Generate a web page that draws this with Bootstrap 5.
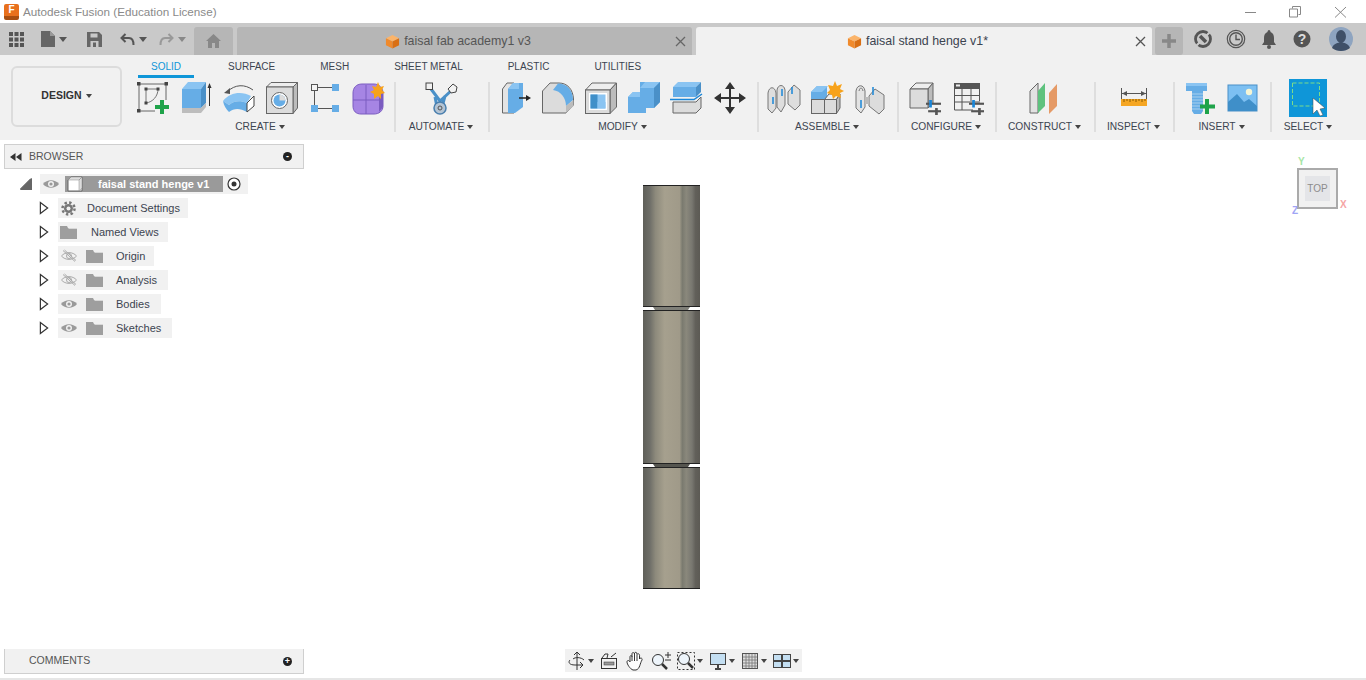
<!DOCTYPE html>
<html lang="en">
<head>
  <meta charset="UTF-8">
  <title>Autodesk Fusion (Education License)</title>
  <meta name="viewport" content="width=device-width, initial-scale=1">
  <link href="https://cdn.jsdelivr.net/npm/bootstrap@5.3.0/dist/css/bootstrap.min.css" rel="stylesheet">
  <style>
    html, body { height: 680px; overflow: hidden; background: #fff; }
    body { font-family: "Liberation Sans", Arial, sans-serif; font-size: 11px; color: #3c4450; }
    svg { display: block; flex: none; }

    .title-bar { height: 23px; color: #8a8a8a; font-size: 11.7px; }
    .app-logo { width: 15px; height: 16px; margin-left: 4px; margin-right: 4px; background: #e8701c; border-bottom: 4px solid #a84e10; border-radius: 2px; color: #fff; font-size: 10px; font-weight: bold; line-height: 12px; text-align: center; }
    .win-btns { gap: 31px; margin-right: 19px; }

    .tab-bar { height: 32px; background: #c9c9c9; }
    .qa-tools { width: 194px; padding-left: 9px; }
    .qa-file { margin-left: 17px; }
    .qa-save { margin-left: 20px; }
    .qa-undo { margin-left: 18px; }
    .qa-redo { margin-left: 12px; }
    .doc-tab { height: 28px; margin-top: 4px; background: #b6b6b6; border-radius: 3px 3px 0 0; color: #555; font-size: 12.4px; }
    .home-tab { width: 39px; margin-right: 4px; }
    .wide-tab { width: 455px; margin-right: 4px; padding-left: 4px; padding-right: 6px; }
    .tab-on { width: 456px; margin-right: 0; background: #f1f1f1; color: #3c4450; }
    .plus-tab { width: 28px; height: 28px; margin-top: 4px; margin-left: 3px; background: #b6b6b6; border-radius: 3px; }
    .acct-tools { gap: 13px; padding-left: 10px; }
    .acct-pic { margin-left: 4px; }

    .caret-mini { display: inline-block; width: 0; height: 0; border-left: 3px solid transparent; border-right: 3px solid transparent; border-top: 4px solid #444; flex: none; }
    .caret-big { border-left-width: 4px; border-right-width: 4px; border-top-width: 5px; border-top-color: #555; }
    .caret-pale { border-top-color: #888; }

    .ribbon { height: 85px; background: #f1f1f1; }
    .design-btn { width: 111px; height: 61px; margin: 11px 4px 0 11px; padding: 0 0 2px !important; background: #f1f1f1; border: 2px solid #dcdcdc; border-radius: 6px; color: #333; font-size: 10.5px; font-weight: bold; }
    .rb-tabs { height: 24px; padding-left: 12px; gap: 19px; }
    .rb-tabs .nav-link { padding: 4px 13px 0; height: 23px; color: #3c4450; font-size: 10px; border-bottom: 3px solid transparent; }
    .rb-tabs .nav-link.active { margin-right: 2px; color: #0f96d8; border-bottom-color: #0f96d8; }
    .rb-grp { position: relative; height: 56px; }
    .rb-grp + .rb-grp::before { content: ""; position: absolute; left: 0; top: 3px; bottom: 3px; width: 2px; background: #dedede; }
    .g-create { width: 268px; } .g-autom { width: 94px; } .g-modify { width: 269px; } .g-assem { width: 140px; }
    .g-config { width: 98px; } .g-constr { width: 99px; } .g-insp { width: 79px; } .g-ins { width: 97px; } .g-sel { width: 76px; }
    .rb-icons { height: 38px; gap: 9px; }
    .rb-label { height: 20px; gap: 3px; font-size: 10.2px; color: #3c4450; }

    .work-area { position: relative; height: 540px; }
    .side-head { width: 300px; height: 25px; margin: 4px 0 0 4px; background: #f1f1f1; border: 1px solid #cfcfcf; color: #555; font-size: 10.5px; }
    .side-head-foot { border-top: 0; margin-top: 0; color: #555; }
    .head-back { margin-left: 5px; }
    .head-label { margin-left: 7px; }
    .foot-label { margin-left: 24px; }
    .dot-btn { width: 9px; height: 9px; margin-right: 11px; background: #222; border-radius: 50%; color: #fff; line-height: 8px; text-align: center; font-size: 9px; font-weight: bold; }
    .tree-area { margin-top: -1px; }
    .tree-row { height: 24px; padding-left: 39px; color: #3c4450; }
    .tree-root { padding-left: 20px; }
    .tree-item { height: 20px; margin-left: 9px; background: #f1f1f1; padding-right: 9px; }
    .tree-root .tree-item { margin-left: 8px; padding-right: 0; }
    .root-eye { margin-left: 2px; }
    .root-name { height: 16px; width: 158px; margin-left: 5px; background: #9a9a9a; color: #fff; font-weight: bold; font-size: 11px; }
    .root-cube { margin-left: 2px; }
    .root-text { margin-left: 13px; }
    .root-dot { margin: 0 7px 0 4px; }
    .ico-lead { margin-left: 2px; }
    .ico-gear { margin-left: 3px; }
    .ico-folder { margin-left: 8px; }
    .lbl-a { margin-left: 11px; margin-right: -1px; }
    .lbl-b { margin-left: 14px; }
    .lbl-c { margin-left: 13px; }
    .lbl-w { margin-right: 2px; }

    .hinge-part { position: absolute; left: 643px; top: 45px; }
    .view-cube { position: absolute; left: 1297px; top: 28px; width: 41px; height: 41px; background: #f1f1f1; border: 2px solid #aaa; }
    .cube-face { width: 25px; height: 25px; background: #e4e5e8; color: #8c8c8c; font-size: 10px; }
    .axis-tag { position: absolute; font-size: 10px; font-weight: bold; line-height: 10px; }
    .axis-y { left: 1298px; top: 17px; color: #a6e6a6; }
    .axis-x { left: 1340px; top: 60px; color: #f5a5a5; }
    .axis-z { left: 1292px; top: 66px; color: #a0a5f5; }

    .foot-row { display: grid; grid-template-columns: 1fr auto 1fr; padding-bottom: 4px; border-bottom: 2px solid #e6e6e6; }
    .view-bar { height: 23px; width: 237px; padding-left: 2px; gap: 5px; background: #f1f1f1; }
    .view-grp { gap: 1px; }
    .view-nudge { margin-left: 1px; }
  </style>
</head>
<body>

<svg width="0" height="0" class="position-absolute">
  <defs>
    <symbol id="cube-orange" viewBox="0 0 16 16">
      <polygon points="8,1 15,4.5 8,8 1,4.5" fill="#fbb46a"/>
      <polygon points="1,4.5 8,8 8,15.5 1,12" fill="#f08a2c"/>
      <polygon points="15,4.5 8,8 8,15.5 15,12" fill="#d96f14"/>
    </symbol>
    <symbol id="eye" viewBox="0 0 18 12">
      <path d="M1 6C5 1 13 1 17 6C13 11 5 11 1 6Z" fill="#9a9a9a"/>
      <circle cx="9" cy="6" r="3" fill="#f1f1f1"/>
      <circle cx="9" cy="6" r="1.6" fill="#9a9a9a"/>
    </symbol>
    <symbol id="eye-off" viewBox="0 0 18 14">
      <path d="M1.500 7C5 2.500 13 2.500 16.500 7C13 11.500 5 11.500 1.500 7Z" fill="none" stroke="#aaa"/>
      <circle cx="9" cy="7" r="2.500" fill="none" stroke="#aaa"/>
      <path d="M3 1.500L15 12.500M4.500 1L16 11.500" stroke="#aaa" fill="none"/>
    </symbol>
    <symbol id="folder" viewBox="0 0 17 13">
      <path d="M0 0H7L8 2H17V13H0Z" fill="#9e9e9e"/>
      <path d="M0 3H8L9 2H17V3H0Z" fill="#d8d8d8"/>
    </symbol>
    <symbol id="tree-arrow" viewBox="0 0 11 14">
      <path d="M1.500 1L9.500 7L1.500 13Z" fill="#fff" stroke="#333" stroke-width="1.300"/>
    </symbol>
    <symbol id="sliders" viewBox="0 0 14 14">
      <rect x="0" y="2.500" width="14" height="2" fill="#555"/>
      <rect x="2" y="9.500" width="12" height="2" fill="#555"/>
      <rect x="3" y="0" width="2.500" height="7" fill="#1a86d8"/>
      <rect x="8.500" y="7.500" width="2.500" height="6.500" fill="#555"/>
    </symbol>
  </defs>
</svg>

<!-- title bar -->
<div class="title-bar d-flex align-items-center">
  <div class="app-logo">F</div>
  <span>Autodesk Fusion (Education License)</span>
  <div class="win-btns d-flex align-items-center ms-auto">
    <svg width="14" height="12" viewBox="0 0 14 12"><path d="M2 6.500H13" stroke="#888"/></svg>
    <svg width="14" height="12" viewBox="0 0 14 12"><path d="M4.500 2.500V.5H12.500V8.500H10.500M1.500 3H9.500V11H1.500Z" fill="none" stroke="#888"/></svg>
    <svg width="14" height="12" viewBox="0 0 14 12"><path d="M2 1L13 11.500M13 1L2 11.500" stroke="#888"/></svg>
  </div>
</div>

<!-- tab bar -->
<div class="tab-bar d-flex">
  <div class="qa-tools d-flex align-items-center">
    <svg width="15" height="15" viewBox="0 0 15 15" fill="#555"><rect width="4" height="4"/><rect x="5.500" width="4" height="4"/><rect x="11" width="4" height="4"/><rect y="5.500" width="4" height="4"/><rect x="5.500" y="5.500" width="4" height="4"/><rect x="11" y="5.500" width="4" height="4"/><rect y="11" width="4" height="4"/><rect x="5.500" y="11" width="4" height="4"/><rect x="11" y="11" width="4" height="4"/></svg>
    <svg class="qa-file" width="14" height="16" viewBox="0 0 14 16"><path d="M0 0H9L14 5V16H0Z" fill="#666"/><path d="M9 0L14 5H9Z" fill="#999"/></svg>
    <span class="caret-mini caret-big ms-1"></span>
    <svg class="qa-save" width="15" height="15" viewBox="0 0 15 15"><path d="M0 0H12L15 3V15H0Z" fill="#666"/><rect x="3.500" y="1.500" width="7" height="4" fill="#c9c9c9"/><rect x="3.500" y="9" width="8" height="6" fill="#c9c9c9"/><rect x="6" y="10.500" width="3" height="4.500" fill="#666"/></svg>
    <svg class="qa-undo" width="15" height="13" viewBox="0 0 15 13"><path d="M5.500 1L1.500 5L5.500 9M2 5H9C12 5 13.500 7 13.500 12" fill="none" stroke="#555" stroke-width="2"/></svg>
    <span class="caret-mini caret-big ms-1"></span>
    <svg class="qa-redo" width="15" height="13" viewBox="0 0 15 13"><path d="M9.500 1L13.500 5L9.500 9M13 5H6C3 5 1.500 7 1.500 12" fill="none" stroke="#999" stroke-width="2"/></svg>
    <span class="caret-mini caret-big caret-pale ms-1"></span>
  </div>
  <div class="doc-tab home-tab d-flex align-items-center justify-content-center">
    <svg width="15" height="14" viewBox="0 0 15 14"><path d="M7.500 0L15 7H13V14H9V9H6V14H2V7H0Z" fill="#888"/></svg>
  </div>
  <div class="doc-tab wide-tab d-flex align-items-center">
    <span class="flex-grow-1"></span>
    <svg width="15" height="15"><use href="#cube-orange"/></svg>
    <span class="ms-1">faisal fab academy1 v3</span>
    <span class="flex-grow-1"></span>
    <svg width="11" height="11" viewBox="0 0 11 11"><path d="M1 1L10 10M10 1L1 10" stroke="#666" stroke-width="1.300"/></svg>
  </div>
  <div class="doc-tab wide-tab tab-on d-flex align-items-center">
    <span class="flex-grow-1"></span>
    <svg width="15" height="15"><use href="#cube-orange"/></svg>
    <span class="ms-1">faisal stand henge v1*</span>
    <span class="flex-grow-1"></span>
    <svg width="11" height="11" viewBox="0 0 11 11"><path d="M1 1L10 10M10 1L1 10" stroke="#555" stroke-width="1.300"/></svg>
  </div>
  <div class="plus-tab d-flex align-items-center justify-content-center">
    <svg width="14" height="14" viewBox="0 0 14 14"><path d="M7 0V14M0 7H14" stroke="#888" stroke-width="3.500"/></svg>
  </div>
  <div class="acct-tools d-flex align-items-center">
    <svg width="20" height="20" viewBox="0 0 20 20"><circle cx="10" cy="10" r="7.500" fill="none" stroke="#555" stroke-width="2.800"/><path d="M3 17L9 11M11 9L17 3" stroke="#c9c9c9" stroke-width="2"/><path d="M7 7L13 13" stroke="#555" stroke-width="3.500"/></svg>
    <svg width="20" height="20" viewBox="0 0 20 20"><circle cx="10" cy="10" r="8.700" fill="none" stroke="#555" stroke-width="1.200"/><circle cx="10" cy="10" r="6.300" fill="none" stroke="#555" stroke-width="1.400"/><path d="M10 5.500V10.500H14" fill="none" stroke="#555" stroke-width="1.400"/></svg>
    <svg width="20" height="20" viewBox="0 0 20 20"><path d="M10 1C11 1 11.500 2 11.500 3C14 4 15 6 15 9V13L17 16H3L5 13V9C5 6 6 4 8.500 3C8.500 2 9 1 10 1Z" fill="#555"/><circle cx="10" cy="18" r="2" fill="#555"/></svg>
    <svg width="20" height="20" viewBox="0 0 20 20"><circle cx="10" cy="10" r="8.500" fill="#555"/><text x="10" y="15" text-anchor="middle" font-family="Liberation Sans" font-weight="bold" font-size="14" fill="#ddd">?</text></svg>
    <svg class="acct-pic" width="24" height="24" viewBox="0 0 24 24"><circle cx="12" cy="12" r="12" fill="#8ea4c0"/><ellipse cx="12" cy="9.500" rx="5" ry="6.500" fill="#3f5068"/><path d="M3 21C5 16 9 16 12 15C15 16 19 16 21 21C16 25 8 25 3 21Z" fill="#3f5068"/></svg>
  </div>
</div>

<!-- ribbon -->
<div class="ribbon d-flex">
  <button class="design-btn btn d-flex align-items-center justify-content-center gap-1" type="button">DESIGN <span class="caret-mini"></span></button>
  <div class="flex-grow-1">
    <ul class="nav rb-tabs">
      <li class="nav-item"><a class="nav-link active" href="#">SOLID</a></li>
      <li class="nav-item"><a class="nav-link" href="#">SURFACE</a></li>
      <li class="nav-item"><a class="nav-link" href="#">MESH</a></li>
      <li class="nav-item"><a class="nav-link" href="#">SHEET METAL</a></li>
      <li class="nav-item"><a class="nav-link" href="#">PLASTIC</a></li>
      <li class="nav-item"><a class="nav-link" href="#">UTILITIES</a></li>
    </ul>
    <div class="d-flex">
      <div class="rb-grp g-create">
        <div class="rb-icons d-flex align-items-center justify-content-center">
          <svg width="34" height="34" viewBox="0 0 34 34"><path d="M3 3H30V19M3 3V30H19" fill="none" stroke="#666"/><path d="M10 22V8H22M22 8C22 15 17 21 10 22" fill="none" stroke="#777"/><g fill="#444"><rect x="1" y="1" width="3.500" height="3.500"/><rect x="28.500" y="1" width="3.500" height="3.500"/><rect x="1" y="28" width="3.500" height="3.500"/><rect x="8.500" y="6.500" width="3" height="3"/><rect x="20.500" y="6.500" width="3" height="3"/><rect x="8.500" y="20.500" width="3" height="3"/></g><path d="M26 19V33M19 26H33" stroke="#1fa34a" stroke-width="4"/></svg>
          <svg width="34" height="34" viewBox="0 0 34 34"><rect x="3" y="8" width="19" height="19" fill="#66ade6"/><polygon points="3,8 9,1 27,1 22,8" fill="#8ac4f2"/><polygon points="22,8 27,1 27,22 22,27" fill="#4a90c8"/><polygon points="3,27 22,27 27,22 27,26 22,32 3,32" fill="#bdbdbd"/><path d="M30.500 25V3" stroke="#333"/><path d="M28.500 7L30.500 2L32.500 7Z" fill="#333"/></svg>
          <svg width="34" height="34" viewBox="0 0 34 34"><path d="M5 11C13 3 23 3 31 9" fill="none" stroke="#555"/><path d="M2 12L8 7L8 13Z" fill="#555"/><path d="M1 20C8 11 20 10 29 15L25 22C18 19 11 20 7 24Z" fill="#8ac4f2"/><path d="M1 20L7 24C11 20 18 19 25 22V31C18 27 12 27 7 31C4 28 2 25 1 20Z" fill="#66ade6"/><polygon points="25,22 32,15 32,25 25,31" fill="#fff" stroke="#444"/></svg>
          <svg width="34" height="34" viewBox="0 0 34 34"><polygon points="1.500,6 6,1.500 32.500,1.500 28,6" fill="#eee" stroke="#666"/><polygon points="28,6 32.500,1.500 32.500,27 28,32.500" fill="#bcbcbc" stroke="#666"/><rect x="1.500" y="6" width="26.500" height="26.500" fill="#dcdcdc" stroke="#666"/><circle cx="14.500" cy="19.500" r="8" fill="#fff" stroke="#666"/><circle cx="14.500" cy="19.500" r="6" fill="#66ade6"/><path d="M14.500 19.500V13.500A6 6 0 0 1 20.500 19.500Z" fill="#dcdcdc"/></svg>
          <svg width="34" height="34" viewBox="0 0 34 34"><path d="M9 6.500H24M6.500 10V24M10 27.500H24" stroke="#555"/><rect x="3.500" y="3.500" width="6" height="6" fill="#f4f4f4" stroke="#555"/><rect x="24" y="3" width="7" height="7" fill="#66ade6"/><rect x="3" y="24" width="7" height="7" fill="#66ade6"/><rect x="24" y="24" width="7" height="7" fill="#66ade6"/></svg>
          <svg width="34" height="34" viewBox="0 0 34 34"><path d="M2 12C2 7 5 3 11 3H23C28 3 32 7 32 12V25C32 30 28 33 23 33H10C5 33 2 30 2 25Z" fill="#a685e4" stroke="#7b5cc0"/><path d="M2 19H28M15 4V33" stroke="#7b5cc0"/><polygon points="28,12 32,10 32,26 28,31" fill="#7b5cc0"/><polygon points="27,1 29,6 33,5 31,9 34,12 30,13 30,18 27,15 23,18 23,13 19,11 23,9 21,5 25,6" fill="#f7a21b"/></svg>
        </div>
        <div class="rb-label d-flex align-items-center justify-content-center">CREATE <span class="caret-mini"></span></div>
      </div>
      <div class="rb-grp g-autom">
        <div class="rb-icons d-flex align-items-center justify-content-center">
          <svg width="34" height="34" viewBox="0 0 34 34"><path d="M7 8L16 20L28 9M16 19V26M11 16L13 26M21 15L18 26" fill="none" stroke="#4a90c8" stroke-width="3"/><circle cx="16" cy="27" r="6" fill="#b4c4d4" stroke="#4a7fae" stroke-width="1.500"/><circle cx="16" cy="27" r="2" fill="none" stroke="#555"/><rect x="2" y="2" width="6.500" height="6.500" fill="#f1f1f1" stroke="#444"/><polygon points="29,3 33,6 32,11 27,12 24,8" fill="#f1f1f1" stroke="#444"/></svg>
        </div>
        <div class="rb-label d-flex align-items-center justify-content-center">AUTOMATE <span class="caret-mini"></span></div>
      </div>
      <div class="rb-grp g-modify">
        <div class="rb-icons d-flex align-items-center justify-content-center">
          <svg width="34" height="34" viewBox="0 0 34 34"><polygon points="4.500,8 9,2 16,2 16,32 4.500,32" fill="#e4e4e4" stroke="#666"/><polygon points="10,8 15,2 25,2 25,26 17,32 10,32" fill="#66ade6"/><polygon points="10,8 15,2 21,2 21,8" fill="#8ac4f2"/><path d="M21 17H30" stroke="#222" stroke-width="1.500"/><path d="M28 14L33 17L28 20Z" fill="#222"/></svg>
          <svg width="34" height="34" viewBox="0 0 34 34"><path d="M1.500 10L9 2H18C26 2 32 8 32.500 18V24L25 32H1.500Z" fill="#dcdcdc" stroke="#666"/><path d="M17 2.500C26 2.500 32 9 32 19L25 25C25 17 20 10 12 9Z" fill="#66ade6"/><path d="M25 25V32L32.500 25V19Z" fill="#bcbcbc"/></svg>
          <svg width="34" height="34" viewBox="0 0 34 34"><polygon points="1.500,9 8,2 32.500,2 26,9" fill="#eee" stroke="#666"/><polygon points="26,9 32.500,2 32.500,26 26,32.500" fill="#bcbcbc" stroke="#666"/><rect x="1.500" y="9" width="24.500" height="23.500" fill="#dcdcdc" stroke="#666"/><rect x="5" y="12" width="18" height="17" fill="#fff"/><rect x="6.500" y="13.500" width="15" height="14" fill="#8ac4f2"/><rect x="6.500" y="13.500" width="7" height="14" fill="#3f8fc9"/><rect x="13.500" y="21" width="8" height="6.500" fill="#8ac4f2"/></svg>
          <svg width="34" height="34" viewBox="0 0 34 34"><polygon points="1,16 6,11 13,11 13,1 33,1 33,21 27,27 19,27 19,32 1,32" fill="#66ade6"/><polygon points="13,7 18,1 33,1 27,7" fill="#8ac4f2"/><polygon points="27,7 33,1 33,21 27,27" fill="#4a90c8"/><polygon points="1,16 6,11 13,11 13,16" fill="#8ac4f2"/></svg>
          <svg width="34" height="34" viewBox="0 0 34 34"><polygon points="3,6 8,1 31,1 26,6" fill="#8ac4f2"/><rect x="3" y="6" width="23" height="10" fill="#66ade6"/><polygon points="26,6 31,1 31,11 26,16" fill="#4a90c8"/><polygon points="3,21 26,21 31,16 31,27 26,32 3,32" fill="#dcdcdc" stroke="#666"/><path d="M0 18.500H24L32 13" fill="none" stroke="#1a86d8" stroke-width="1.500"/></svg>
          <svg width="34" height="34" viewBox="0 0 34 34"><path d="M17 3V31M3 17H31" stroke="#333" stroke-width="2"/><path d="M17 1L22 8H12ZM17 33L22 26H12ZM1 17L8 12V22ZM33 17L26 12V22Z" fill="#333"/></svg>
        </div>
        <div class="rb-label d-flex align-items-center justify-content-center">MODIFY <span class="caret-mini"></span></div>
      </div>
      <div class="rb-grp g-assem">
        <div class="rb-icons d-flex align-items-center justify-content-center">
          <svg width="34" height="34" viewBox="0 0 34 34"><g fill="#dedede" stroke="#777"><path d="M1 12C2 5 8 5 9 12V27L5 32L1 28Z"/><path d="M10 9C11 3 17 3 18 9V24L14 31L10 26Z"/><path d="M21 11L27 4L33 9V24L28 29L21 23Z"/></g><path d="M6 16V23M15 8V15M25 6V13" stroke="#1a86d8" stroke-width="1.500"/></svg>
          <svg width="34" height="34" viewBox="0 0 34 34"><polygon points="1,11 7,5 17,5 17,18 1,18" fill="#66ade6"/><polygon points="1,11 7,5 18,5 12,11" fill="#8ac4f2"/><rect x="1.500" y="18.500" width="13" height="14" fill="#dcdcdc" stroke="#666"/><rect x="14.500" y="18.500" width="12" height="14" fill="#dcdcdc" stroke="#666"/><polygon points="14.500,18.500 19,13 30,13 26.500,18.500" fill="#eee" stroke="#666"/><polygon points="26.500,18.500 30,13 30,27 26.500,32.500" fill="#bcbcbc" stroke="#666"/><polygon points="25,0 27,5 32,3 30,8 34,10 30,12 31,17 26,15 23,18 22,14 17,12 20,9 18,4 23,5" fill="#f7a21b"/></svg>
          <svg width="34" height="34" viewBox="0 0 34 34"><path d="M3 10C4 3 11 3 12 10V26L8 32L3 27Z" fill="#e3e3e3" stroke="#777"/><path d="M6 10C7 6 9 6 10 10" fill="none" stroke="#777"/><path d="M16 15L22 8L31 14V28L26 33L16 25Z" fill="#dcdcdc" stroke="#777"/><path d="M12 16H16V23H12Z" fill="#bbb"/><path d="M8 19V27M20 6V14" stroke="#1a86d8" stroke-width="1.500"/></svg>
        </div>
        <div class="rb-label d-flex align-items-center justify-content-center">ASSEMBLE <span class="caret-mini"></span></div>
      </div>
      <div class="rb-grp g-config">
        <div class="rb-icons d-flex align-items-center justify-content-center">
          <svg width="34" height="34" viewBox="0 0 34 34"><polygon points="2,8 8,2 25,2 20,8" fill="#eee" stroke="#666"/><polygon points="20,8 25,2 25,22 20,27" fill="#bcbcbc" stroke="#666"/><polygon points="2,8 20,8 20,27 2,27" fill="#dcdcdc" stroke="#666"/><use href="#sliders" x="18" y="19" width="15" height="15"/></svg>
          <svg width="34" height="34" viewBox="0 0 34 34"><rect x="3" y="2" width="26" height="6" fill="#555"/><rect x="5" y="3.500" width="4" height="2" fill="#eee"/><path d="M3.500 8V29H22M28.500 8V20M3 14.500H29M3 21H29M11 8V29M20 8V20" fill="none" stroke="#555"/><use href="#sliders" x="18" y="19" width="15" height="15"/></svg>
        </div>
        <div class="rb-label d-flex align-items-center justify-content-center">CONFIGURE <span class="caret-mini"></span></div>
      </div>
      <div class="rb-grp g-constr">
        <div class="rb-icons d-flex align-items-center justify-content-center">
          <svg width="34" height="34" viewBox="0 0 34 34"><polygon points="2,10 10,2 10,32 2,32" fill="#e2e2e2" stroke="#666"/><polygon points="10,10 17,2 17,25 10,32" fill="#5ec27e"/><polygon points="21,12 29,3 29,25 21,33" fill="#e59a66"/></svg>
        </div>
        <div class="rb-label d-flex align-items-center justify-content-center">CONSTRUCT <span class="caret-mini"></span></div>
      </div>
      <div class="rb-grp g-insp">
        <div class="rb-icons d-flex align-items-center justify-content-center">
          <svg width="34" height="34" viewBox="0 0 34 34"><path d="M4.500 7V18M29.500 7V18M5 12.500H29" stroke="#555"/><path d="M5 12.500L10 10V15ZM29 12.500L24 10V15Z" fill="#555"/><rect x="4" y="18" width="26" height="7" fill="#f5a623"/><path d="M7 18V21M10 18V20M13 18V21M16 18V20M19 18V21M22 18V20M25 18V21M28 18V20" stroke="#8a5a00"/></svg>
        </div>
        <div class="rb-label d-flex align-items-center justify-content-center">INSPECT <span class="caret-mini"></span></div>
      </div>
      <div class="rb-grp g-ins">
        <div class="rb-icons d-flex align-items-center justify-content-center">
          <svg width="34" height="34" viewBox="0 0 34 34"><path d="M3 2H24V10H20V30L18 33H11L9 30V10H3Z" fill="#66ade6"/><rect x="3" y="2" width="21" height="3" fill="#8ac4f2"/><path d="M9 13H20M9 16H20M9 19H20M9 22H20M9 25H20M9 28H20" stroke="#a8d0ee"/><path d="M24 18V33M17 25.500H32" stroke="#1fa34a" stroke-width="4"/></svg>
          <svg width="34" height="34" viewBox="0 0 34 34"><rect x="2" y="4" width="29" height="26" fill="#7dc0f2" stroke="#4a90c8"/><circle cx="23" cy="11" r="3.200" fill="#f5f5d5"/><path d="M2 30V21L11 13L18 21L23 18L31 25V30Z" fill="#3f8fc9"/></svg>
        </div>
        <div class="rb-label d-flex align-items-center justify-content-center">INSERT <span class="caret-mini"></span></div>
      </div>
      <div class="rb-grp g-sel">
        <div class="rb-icons d-flex align-items-center justify-content-center">
          <svg width="38" height="38" viewBox="0 0 38 38"><rect width="38" height="38" fill="#0f96d8"/><rect x="3.500" y="4" width="27" height="23" fill="none" stroke="#7ddc8a" stroke-dasharray="4 2"/><path d="M24 19V35L28 31L31 37L34 36L31 30L36 29Z" fill="#fff" stroke="#444" stroke-width=".5"/></svg>
        </div>
        <div class="rb-label d-flex align-items-center justify-content-center">SELECT <span class="caret-mini"></span></div>
      </div>
    </div>
  </div>
</div>

<!-- canvas -->
<div class="work-area d-flex flex-column">
  <!-- hinge model -->
  <svg class="hinge-part" width="57" height="404" viewBox="0 0 57 404">
    <defs>
      <linearGradient id="metal">
        <stop offset="0" stop-color="#5f5f59"/>
        <stop offset=".12" stop-color="#6e6e68"/>
        <stop offset=".22" stop-color="#8d8a7c"/>
        <stop offset=".38" stop-color="#a6a08e"/>
        <stop offset=".64" stop-color="#a09a89"/>
        <stop offset=".69" stop-color="#7a7a6f"/>
        <stop offset=".76" stop-color="#8a887c"/>
        <stop offset=".86" stop-color="#787770"/>
        <stop offset=".92" stop-color="#62605a"/>
        <stop offset="1" stop-color="#5c5a54"/>
      </linearGradient>
    </defs>
    <rect width="57" height="121" fill="url(#metal)"/>
    <rect y="125" width="57" height="154" fill="url(#metal)"/>
    <rect y="282" width="57" height="122" fill="url(#metal)"/>
    <path d="M0 .5H57M0 121.500H57M0 125.500H57M0 278.500H57M0 282.500H57M0 403.500H57" stroke="#222"/>
    <path d="M10 122H47L45 125H12Z" fill="#7f7f78"/>
    <path d="M10 279H47L45 282H12Z" fill="#55554f"/>
  </svg>

  <div class="side-head d-flex align-items-center">
    <svg class="head-back" width="12" height="8" viewBox="0 0 12 8"><path d="M5.500 0V8L0 4ZM11.500 0V8L6 4Z" fill="#333"/></svg>
    <span class="head-label">BROWSER</span>
    <span class="dot-btn ms-auto">-</span>
  </div>

  <div class="tree-area flex-grow-1 pt-1">
    <div class="tree-row tree-root d-flex align-items-center">
      <svg width="12" height="12" viewBox="0 0 12 12"><path d="M0 12L12 0V12Z" fill="#666"/><path d="M0 11.500L11 .5" stroke="#222"/></svg>
      <div class="tree-item d-flex align-items-center">
        <svg class="root-eye" width="18" height="12"><use href="#eye"/></svg>
        <div class="root-name d-flex align-items-center">
          <svg class="root-cube" width="18" height="16" viewBox="0 0 18 16"><path d="M1 4L4 1H15V15H1Z" fill="#fff" stroke="#666"/><path d="M4 1H15L12 4H1ZM12 4L15 1V12L12 15Z" fill="#ddd" stroke="#888" stroke-width=".5"/></svg>
          <span class="root-text">faisal stand henge v1</span>
        </div>
        <svg class="root-dot" width="14" height="14" viewBox="0 0 14 14"><circle cx="7" cy="7" r="6" fill="#fff" stroke="#333" stroke-width="1.200"/><circle cx="7" cy="7" r="2.500" fill="#333"/></svg>
      </div>
    </div>
    <div class="tree-row d-flex align-items-center">
      <svg width="10" height="14"><use href="#tree-arrow"/></svg>
      <div class="tree-item d-flex align-items-center">
        <svg class="ico-gear" width="15" height="15" viewBox="0 0 15 15"><circle cx="7.500" cy="7.500" r="4.500" fill="#777"/><circle cx="7.500" cy="7.500" r="6" fill="none" stroke="#777" stroke-width="2.500" stroke-dasharray="2.400 2.300"/><circle cx="7.500" cy="7.500" r="2" fill="#f1f1f1"/></svg>
        <span class="lbl-a">Document Settings</span>
      </div>
    </div>
    <div class="tree-row d-flex align-items-center">
      <svg width="10" height="14"><use href="#tree-arrow"/></svg>
      <div class="tree-item d-flex align-items-center">
        <svg class="ico-lead" width="17" height="13"><use href="#folder"/></svg>
        <span class="lbl-b">Named Views</span>
      </div>
    </div>
    <div class="tree-row d-flex align-items-center">
      <svg width="10" height="14"><use href="#tree-arrow"/></svg>
      <div class="tree-item d-flex align-items-center">
        <svg class="ico-lead" width="18" height="14"><use href="#eye-off"/></svg>
        <svg class="ico-folder" width="17" height="13"><use href="#folder"/></svg>
        <span class="lbl-c">Origin</span>
      </div>
    </div>
    <div class="tree-row d-flex align-items-center">
      <svg width="10" height="14"><use href="#tree-arrow"/></svg>
      <div class="tree-item d-flex align-items-center">
        <svg class="ico-lead" width="18" height="14"><use href="#eye-off"/></svg>
        <svg class="ico-folder" width="17" height="13"><use href="#folder"/></svg>
        <span class="lbl-c lbl-w">Analysis</span>
      </div>
    </div>
    <div class="tree-row d-flex align-items-center">
      <svg width="10" height="14"><use href="#tree-arrow"/></svg>
      <div class="tree-item d-flex align-items-center">
        <svg class="ico-lead" width="18" height="12"><use href="#eye"/></svg>
        <svg class="ico-folder" width="17" height="13"><use href="#folder"/></svg>
        <span class="lbl-c lbl-w">Bodies</span>
      </div>
    </div>
    <div class="tree-row d-flex align-items-center">
      <svg width="10" height="14"><use href="#tree-arrow"/></svg>
      <div class="tree-item d-flex align-items-center">
        <svg class="ico-lead" width="18" height="12"><use href="#eye"/></svg>
        <svg class="ico-folder" width="17" height="13"><use href="#folder"/></svg>
        <span class="lbl-c lbl-w">Sketches</span>
      </div>
    </div>
  </div>

  <!-- view cube -->
  <div class="axis-tag axis-y">Y</div>
  <div class="view-cube d-flex align-items-center justify-content-center"><div class="cube-face d-flex align-items-center justify-content-center">TOP</div></div>
  <div class="axis-tag axis-x">X</div>
  <div class="axis-tag axis-z">Z</div>

  <div class="foot-row">
    <div class="side-head side-head-foot d-flex align-items-center">
      <span class="foot-label">COMMENTS</span>
      <span class="dot-btn ms-auto">+</span>
    </div>
    <div class="view-bar d-flex align-items-center">
      <div class="view-grp d-flex align-items-center">
        <svg width="20" height="20" viewBox="0 0 20 20"><path d="M10 1V19M7 4L10 1L13 4" fill="none" stroke="#333"/><path d="M3 9C1 11 2 14 8 14H16M13 11L16 14L13 17" fill="none" stroke="#333"/><path d="M6 8C8 6 14 6 17 9" fill="none" stroke="#333"/></svg>
        <span class="caret-mini"></span>
      </div>
      <svg width="20" height="20" viewBox="0 0 20 20"><rect x="2.500" y="7.500" width="15" height="10" fill="#f1f1f1" stroke="#333"/><rect x="5" y="11" width="10" height="3" fill="#999" stroke="#333" stroke-width=".5"/><path d="M3 7L6 3H9L8 7M12 6L17 2" fill="none" stroke="#333"/></svg>
      <svg class="view-nudge" width="20" height="20" viewBox="0 0 20 20"><path d="M5 11V6C5 4 7 4 7 6V3C7 1 9 1 9.500 3V2C10 1 12 1 12 3V3.500C13 2 15 3 14.500 5V8C16 6 17.500 7.500 17 9C15 12 15 18 11 19H8C5 18 2 13 2 11C2 9 4 9 5 11Z" fill="#fff" stroke="#333"/><path d="M7 6V10M9.500 3V10M12 4V10" stroke="#333" fill="none"/></svg>
      <svg class="view-nudge" width="20" height="20" viewBox="0 0 20 20"><circle cx="7" cy="9" r="5.500" fill="#eef5fb" stroke="#333"/><path d="M11 13L16 18" stroke="#333" stroke-width="2.500"/><path d="M17 1V7M14 4H20M14 9H20" stroke="#333"/></svg>
      <div class="view-grp d-flex align-items-center">
        <svg width="20" height="20" viewBox="0 0 20 20"><rect x="1.500" y="1.500" width="17" height="17" fill="none" stroke="#333" stroke-dasharray="2 2"/><circle cx="8" cy="8" r="5.500" fill="#eef5fb" stroke="#333"/><path d="M12 12L17 17" stroke="#333" stroke-width="2.500"/></svg>
        <span class="caret-mini"></span>
      </div>
      <div class="view-grp d-flex align-items-center">
        <svg width="20" height="20" viewBox="0 0 20 20"><rect x="2.500" y="2.500" width="15" height="11" fill="#c4dff2" stroke="#444"/><path d="M7 18H13M10 14V18" stroke="#444" stroke-width="2"/></svg>
        <span class="caret-mini"></span>
      </div>
      <div class="view-grp d-flex align-items-center">
        <svg width="20" height="20" viewBox="0 0 20 20"><rect x="2.500" y="2.500" width="15" height="15" fill="#ddd" stroke="#555"/><path d="M6 3V17M9 3V17M12 3V17M15 3V17M3 6H17M3 9H17M3 12H17M3 15H17" stroke="#777" stroke-width=".8"/></svg>
        <span class="caret-mini"></span>
      </div>
      <div class="view-grp d-flex align-items-center">
        <svg width="20" height="20" viewBox="0 0 20 20"><rect x="1.500" y="3.500" width="8" height="6" fill="#c4dff2" stroke="#444"/><rect x="10.500" y="3.500" width="8" height="6" fill="#c4dff2" stroke="#444"/><rect x="1.500" y="10.500" width="8" height="6" fill="#c4dff2" stroke="#444"/><rect x="10.500" y="10.500" width="8" height="6" fill="#c4dff2" stroke="#444"/></svg>
        <span class="caret-mini"></span>
      </div>
    </div>
    <div></div>
  </div>
</div>

<script src="https://cdn.jsdelivr.net/npm/bootstrap@5.3.0/dist/js/bootstrap.bundle.min.js"></script>
</body>
</html>
